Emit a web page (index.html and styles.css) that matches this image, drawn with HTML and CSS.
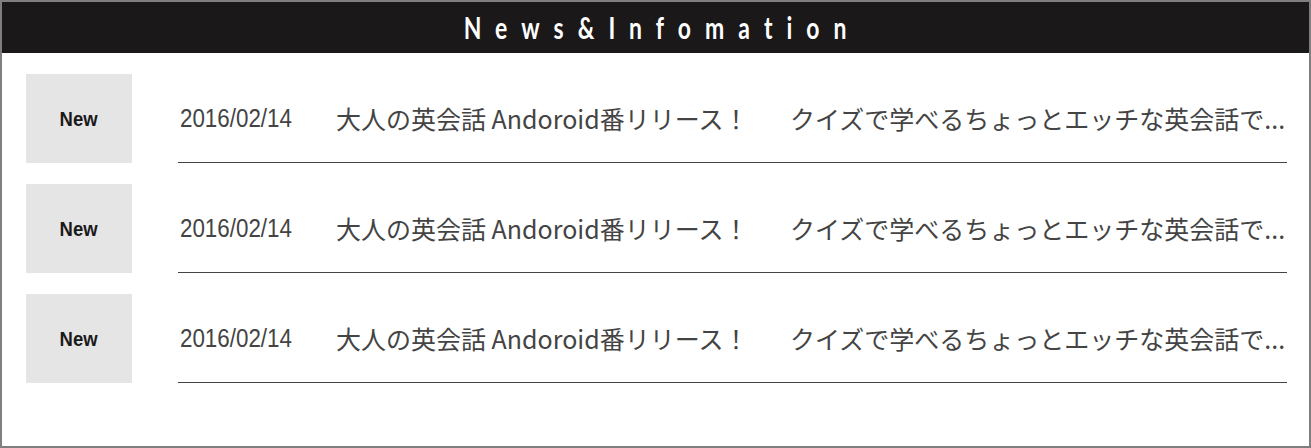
FILE: index.html
```html
<!DOCTYPE html>
<html lang="ja">
<head>
<meta charset="utf-8">
<title>News&amp;Infomation</title>
<link rel="stylesheet" href="styles.css">
</head>
<body>
<section class="news">
  <h2 class="news-head"><span class="news-head-text">News&amp;Infomation</span></h2>
  <ul class="news-list">
    <li class="news-item">
      <div class="badge"><span class="badge-text">New</span></div>
      <div class="news-body">
        <span class="date"><span class="date-text">2016/02/14</span></span>
        <span class="title">大人の英会話 Andoroid番リリース！</span>
        <span class="desc">クイズで学べるちょっとエッチな英会話で...</span>
      </div>
    </li>
    <li class="news-item">
      <div class="badge"><span class="badge-text">New</span></div>
      <div class="news-body">
        <span class="date"><span class="date-text">2016/02/14</span></span>
        <span class="title">大人の英会話 Andoroid番リリース！</span>
        <span class="desc">クイズで学べるちょっとエッチな英会話で...</span>
      </div>
    </li>
    <li class="news-item">
      <div class="badge"><span class="badge-text">New</span></div>
      <div class="news-body">
        <span class="date"><span class="date-text">2016/02/14</span></span>
        <span class="title">大人の英会話 Andoroid番リリース！</span>
        <span class="desc">クイズで学べるちょっとエッチな英会話で...</span>
      </div>
    </li>
  </ul>
</section>
</body>
</html>
```
FILE: styles.css
```css
html, body {
  margin: 0;
  padding: 0;
  background: #ffffff;
}
.news {
  box-sizing: border-box;
  width: 1311px;
  height: 448px;
  border: 2px solid #7f7f7f;
  background: #ffffff;
}
.news-head {
  margin: 0;
  height: 51px;
  background: #1a1818;
  color: #ffffff;
  font-family: Lato, "Open Sans", sans-serif;
  font-weight: bold;
  font-size: 31px;
  line-height: 51px;
  text-align: center;
  overflow: hidden;
}
.news-head-text {
  display: inline-block;
  letter-spacing: 19px;
  margin-right: -13px;
  transform: scaleX(0.74);
  transform-origin: center;
}
.news-list {
  list-style: none;
  margin: 0;
  padding: 21px 22px 0 24px;
  display: flex;
  flex-direction: column;
  gap: 21px;
}
.news-item {
  display: flex;
  gap: 46px;
  height: 89px;
}
.badge {
  width: 106px;
  height: 89px;
  flex: none;
  background: #e5e5e5;
  display: flex;
  align-items: center;
  justify-content: center;
  font-family: "Liberation Sans", Arial, sans-serif;
  font-weight: bold;
  font-size: 21px;
  color: #1a1a1a;
}
.badge-text {
  display: inline-block;
  transform: scaleX(0.88);
}
.news-body {
  flex: 1;
  display: flex;
  align-items: center;
  border-bottom: 1px solid #444444;
  padding-left: 2px;
  height: 88px;
  color: #444444;
  white-space: nowrap;
}
.date {
  width: 156px;
  flex: none;
  font-family: "Liberation Sans", Arial, sans-serif;
  font-size: 26px;
}
.date-text {
  display: inline-block;
  transform: scaleX(0.86);
  transform-origin: left center;
}
.title, .desc {
  font-family: "Noto Sans CJK JP", sans-serif;
  font-size: 25px;
}
.title {
  width: 454px;
  flex: none;
}
```
